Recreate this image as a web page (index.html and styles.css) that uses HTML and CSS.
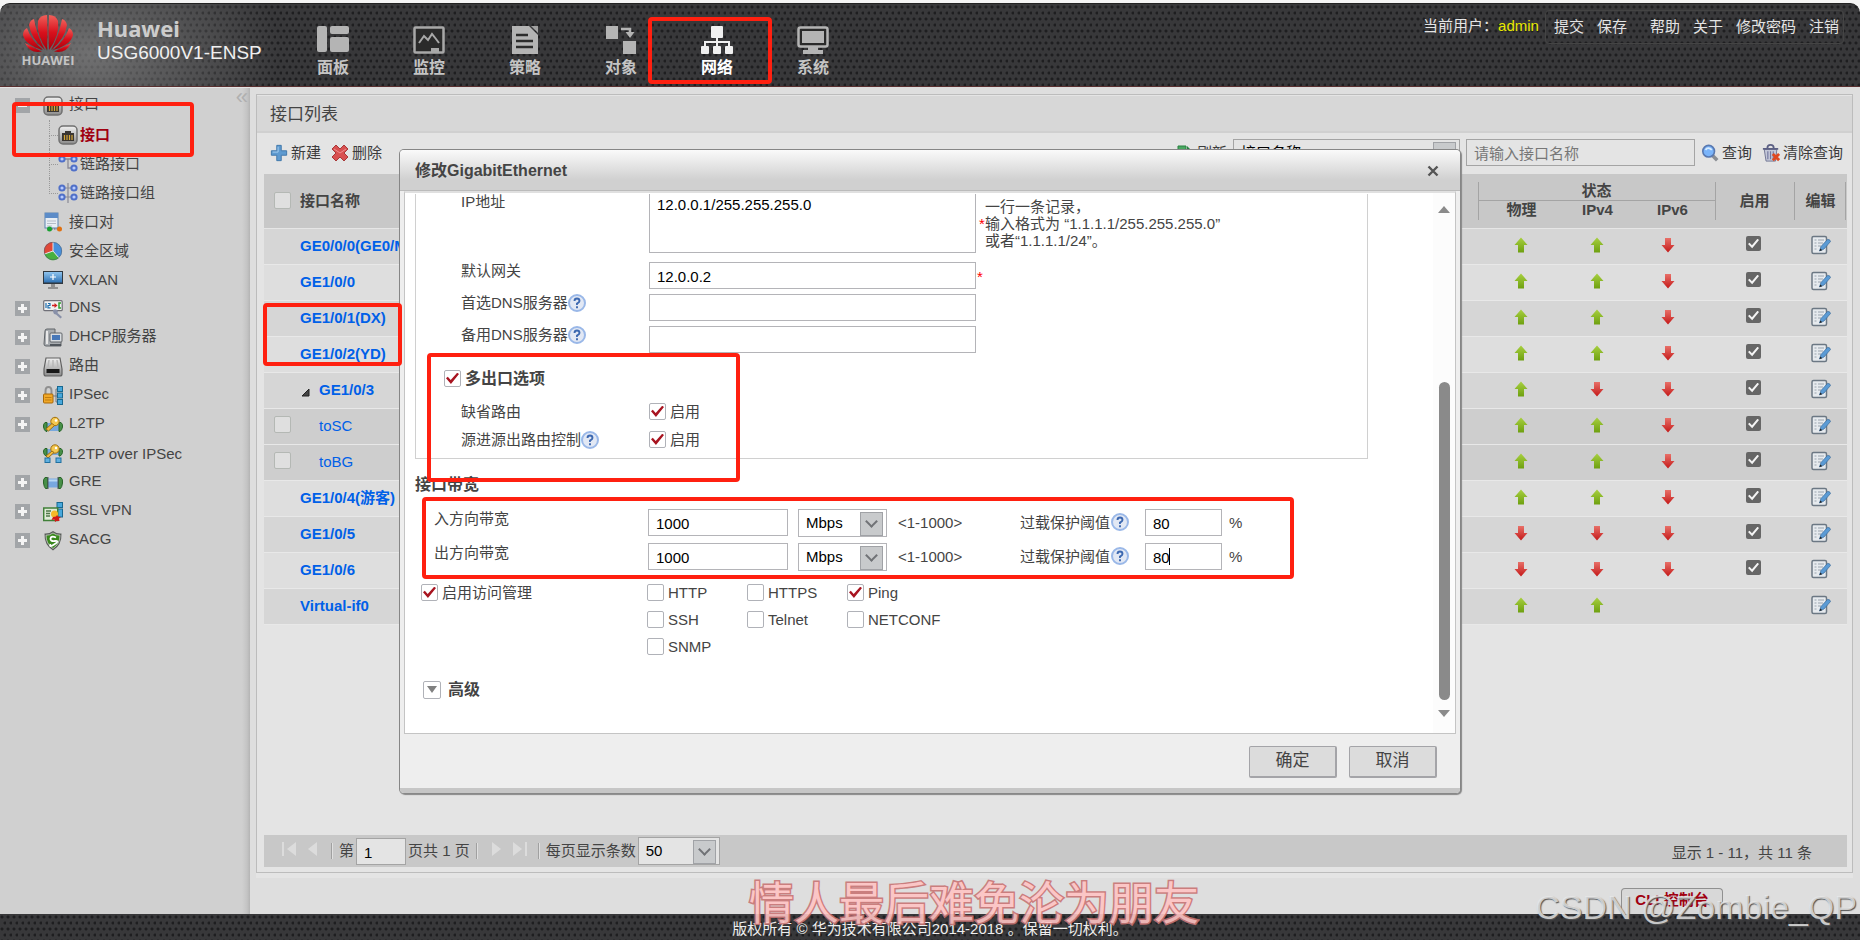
FILE: index.html
```html
<!DOCTYPE html>
<html lang="zh-CN">
<head>
<meta charset="utf-8">
<title>USG6000V1-ENSP</title>
<link rel="stylesheet" href="styles.css">
</head>
<body>
<svg class="sprite" aria-hidden="true">
  <defs>
    <linearGradient id="g-red" x1="0" y1="0" x2="0" y2="1"><stop offset="0" stop-color="#f0605a"/><stop offset=".5" stop-color="#d8101c"/><stop offset="1" stop-color="#a8000c"/></linearGradient>
    <linearGradient id="g-metal" x1="0" y1="0" x2="0" y2="1"><stop offset="0" stop-color="#f2f2f2"/><stop offset="1" stop-color="#8a8a8a"/></linearGradient>
    <linearGradient id="g-blue" x1="0" y1="0" x2="0" y2="1"><stop offset="0" stop-color="#8fc4ee"/><stop offset="1" stop-color="#2f72b4"/></linearGradient>
    <linearGradient id="g-up" x1="0" y1="0" x2="0" y2="1"><stop offset="0" stop-color="#a8d040"/><stop offset="1" stop-color="#6ea010"/></linearGradient>
    <linearGradient id="g-down" x1="0" y1="0" x2="0" y2="1"><stop offset="0" stop-color="#e87068"/><stop offset="1" stop-color="#c41818"/></linearGradient>
  </defs>
  <symbol id="i-up" viewBox="0 0 14 16"><path d="M7 0.500L13.500 8H10v7.500H4V8H0.500z" fill="url(#g-up)"/></symbol>
  <symbol id="i-down" viewBox="0 0 14 16"><path d="M7 15.500L13.500 8H10V1H4v7H0.500z" fill="url(#g-down)"/></symbol>
  <symbol id="i-edit" viewBox="0 0 20 20"><rect x="1" y="1.500" width="14.500" height="17" rx="1.500" fill="#e6eaee" stroke="#6c7884" stroke-width="1.500"/><path d="M3.500 5h2M7 5h6M3.500 8h2M7 8h5M3.500 11h2M7 11h3M3.500 14h2" stroke="#9aa4ae"/><path d="M8.500 16l1.500-4.500L16.500 4.500q2.500-.500 3 2L13 14z" fill="#5b9bd5" stroke="#3a6c9c" stroke-width=".7"/><path d="M8.500 16l.8-2.600 2 1.800z" fill="#222"/></symbol>
  <symbol id="i-port" viewBox="0 0 20 20"><rect x="1" y="1" width="18" height="18" rx="4" fill="url(#g-metal)" stroke="#707070" stroke-width="1.500"/><path d="M4 8h3V6h6v2h3v8H4z" fill="#3a3632"/><path d="M6.500 10v5M9 10v5M11.500 10v5M14 10v5" stroke="#d8a838" stroke-width="1.200"/></symbol>
  <symbol id="i-link" viewBox="0 0 20 20"><path d="M4 5h12M10 5v9h6" fill="none" stroke="#8a8a96" stroke-width="1.300"/><g fill="#b8ccff" stroke="#5070c8" stroke-width="2"><circle cx="4" cy="5" r="2.600"/><circle cx="16" cy="5" r="2.600"/><circle cx="16" cy="14" r="2.600"/></g></symbol>
  <symbol id="i-group" viewBox="0 0 20 20"><path d="M10 0v20M4 5h12M4 14h12" fill="none" stroke="#8a8a96" stroke-width="1.200"/><g fill="#b8ccff" stroke="#5070c8" stroke-width="2"><circle cx="4" cy="5" r="2.600"/><circle cx="16" cy="5" r="2.600"/><circle cx="4" cy="14" r="2.600"/><circle cx="16" cy="14" r="2.600"/></g></symbol>
  <symbol id="i-pair" viewBox="0 0 20 20"><rect x="2" y="1" width="13" height="15" fill="#e8eef4" stroke="#5c84b0"/><path d="M2 1h13v5H2z" fill="#5c8cc8"/><path d="M4 9h9M4 11.500h9M4 14h5" stroke="#b4bcc8"/><path d="M6 17h10" stroke="#667" stroke-dasharray="1.500 1"/><circle cx="6.500" cy="17" r="2.500" fill="#18a030"/><circle cx="16.500" cy="17" r="2.500" fill="#e07010"/></symbol>
  <symbol id="i-zone" viewBox="0 0 20 20"><circle cx="10" cy="10" r="9" fill="#4890dc"/><path d="M10 10L1.500 13A9 9 0 0 0 16 17z" fill="#48b040"/><path d="M10 10V1A9 9 0 0 0 1.500 13z" fill="#e04838"/><path d="M10 1v9l6 7M10 10L1.500 13" stroke="#e8e8e8" fill="none"/><circle cx="10" cy="10" r="8.700" fill="none" stroke="#505860" stroke-opacity=".5"/></symbol>
  <symbol id="i-vx" viewBox="0 0 20 20"><rect x="0" y="1" width="20" height="13" fill="#303840"/><rect x="1" y="2" width="18" height="10.500" fill="url(#g-blue)"/><path d="M10 4v6M7 7h6" stroke="#fff" stroke-width="1.200"/><path d="M8 14h4v3h3v2H5v-2h3z" fill="#909090"/></symbol>
  <symbol id="i-dns" viewBox="0 0 20 20"><rect x=".7" y="1.700" width="18.500" height="10" rx="1" fill="#f0f0f0" stroke="#707078" stroke-width="1.200"/><path d="M3 4v5M5 4.500h2v2H5v2.300h2.500" stroke="#2070b0" fill="none" stroke-width="1.200"/><path d="M9 6.500h3" stroke="#d02020" stroke-width="1.500"/><path d="M11.500 4l3 2.500-3 2.500z" fill="#d02020"/><path d="M18 4h-2v5h2" stroke="#30a030" fill="none" stroke-width="1.500"/><path d="M10 11q3-2 5 1l-.5 2 4.500 4-1.500 1.500-4.500-4q-3 0-3-4.500" fill="#8890a8"/></symbol>
  <symbol id="i-dhcp" viewBox="0 0 20 20"><path d="M2 3q0-2 2-2h8v5h6v12H3q-2 0-2-2z" fill="#a8acb0" stroke="#606468"/><path d="M4 3v13" stroke="#e8e8e8" stroke-width="2"/><rect x="7" y="5" width="12" height="9" rx="1" fill="#d8dce0" stroke="#606468"/><rect x="9" y="7" width="8" height="5" fill="#4878b8"/><path d="M7 17h11" stroke="#50565c" stroke-width="2"/></symbol>
  <symbol id="i-route" viewBox="0 0 20 20"><path d="M3 1h14l2 11v5q0 2-2 2H3q-2 0-2-2v-5z" fill="url(#g-metal)" stroke="#606060" stroke-width="1.200"/><path d="M6 3L5 10M10 3v7M14 3l1 7" stroke="#b8b8b8" stroke-width="1.500"/><rect x="3.500" y="12" width="13" height="4" fill="#181818"/></symbol>
  <symbol id="i-ipsec" viewBox="0 0 20 20"><path d="M2.500 8V5q0-4 3-4t3 4v3" fill="none" stroke="#909090" stroke-width="2"/><rect x=".5" y="8" width="9.500" height="9" rx="1" fill="#f0a828" stroke="#a86808"/><path d="M2 11.500h6.500M2 14h6.500" stroke="#c07c10"/><path d="M10 10h4M15 3h-2v13h2" stroke="#707880" fill="none"/><g fill="#48a8dc" stroke="#186890"><rect x="14.500" y=".5" width="5" height="5"/><rect x="14.500" y="7" width="5" height="5"/><rect x="14.500" y="13.500" width="5" height="5"/></g></symbol>
  <symbol id="i-l2tp" viewBox="0 0 20 20"><path d="M2 8h16v8H2z" fill="#78a8dc"/><path d="M4 7.500H2Q0 9 .5 12T3 16.500h1zM16 7.500h2q2 1.500 1.500 4.500T17 16.500h-1z" fill="#489048" stroke="#286428"/><circle cx="12" cy="6.500" r="4.200" fill="#f4c850" stroke="#a07010"/><circle cx="13" cy="5.500" r="1.300" fill="#fff"/><path d="M9 8.500L3 14l2.500 2L11.500 10.500z" fill="#f0bc40" stroke="#a07010"/></symbol>
  <symbol id="i-l2ip" viewBox="0 0 20 20"><path d="M2 5h16v6H2z" fill="#78a8dc"/><path d="M4 4.500H2Q0 6 .5 8.500T3 12h1zM16 4.500h2q2 1.500 1.500 4T17 12h-1z" fill="#489048" stroke="#286428"/><circle cx="12" cy="5" r="4.200" fill="#f4c850" stroke="#a07010"/><circle cx="13" cy="4" r="1.200" fill="#fff"/><path d="M9 7l-6 5 2 2 6-5.500z" fill="#f0bc40" stroke="#a07010"/><g fill="#60b0e0" stroke="#2070a0"><rect x="2" y="14" width="5" height="4.500"/><rect x="13" y="14" width="5" height="4.500"/></g></symbol>
  <symbol id="i-gre" viewBox="0 0 20 20"><path d="M4 5.500h12v9H4z" fill="#78a8e0"/><path d="M4 7.500h12" stroke="#b8d8f4" stroke-width="2"/><path d="M4.500 4.500H2Q0 6 .5 10t2 5.500h2zM15.500 4.500H18q2 1.500 1.500 5.500t-2 5.500h-2z" fill="#489048" stroke="#286428"/><path d="M5 4v12M15 4v12" stroke="#505860"/></symbol>
  <symbol id="i-ssl" viewBox="0 0 20 20"><g fill="#48a8dc" stroke="#186890"><rect x="14" y=".5" width="5.500" height="5"/><rect x="14" y="7" width="5.500" height="8"/></g><rect x=".7" y="6" width="14" height="12.500" fill="#e0ecd8" stroke="#408038" stroke-width="1.500"/><path d="M3 9h5M3 11.500h4M3 14h4" stroke="#507848" stroke-width="1.300"/><circle cx="11.500" cy="12" r="3.500" fill="#f4b828"/><path d="M10 15l3-.5 1-1.500 1 1.500 3 .5-2 1.500.5 2.500h-3l-1.500 1-.5-2.500-3 .500z" fill="#d01818"/></symbol>
  <symbol id="i-sacg" viewBox="0 0 20 20"><path d="M10 0q4 3 8.500 2.500Q19 14 10 19.500 1 14 1.500 2.500 6 3 10 0z" fill="#585c58"/><path d="M10 2q3.500 2.500 7 2.200Q17 13 10 17.500 3 13 3 4.200 6.500 4.500 10 2z" fill="#38881c" stroke="#e0e0e0" stroke-width=".7"/><path d="M13 6.500q-5-2-5.500 1T12 10t-.5 3.300T7.500 13" fill="none" stroke="#fff" stroke-width="1.800"/></symbol>
  <symbol id="i-help" viewBox="0 0 18 18"><circle cx="9" cy="9" r="8" fill="#e2e8f4" stroke="#9ab8e8" stroke-width="2"/><path d="M6.500 7q0-2.500 2.500-2.500T11.500 7Q11.500 8.300 9 9.600V11M9 12.200v2" fill="none" stroke="#3c68b0" stroke-width="1.900"/></symbol>
  <symbol id="i-plus" viewBox="0 0 20 20"><path d="M7.500 1.500h5v6h6v5h-6v6h-5v-6h-6v-5h6z" fill="#5e9ad0" stroke="#3c74a8"/><path d="M9 3v6H3" stroke="#a8d0f0" fill="none"/></symbol>
  <symbol id="i-del" viewBox="0 0 18 18"><path d="M5 1l4 4 4-4 4 4-4 4 4 4-4 4-4-4-4 4-4-4 4-4-4-4z" fill="#d85050" stroke="#a83838" stroke-linejoin="round"/><path d="M3 5l6 4 6-4" stroke="#f09090" fill="none"/></symbol>
  <symbol id="i-find" viewBox="0 0 20 20"><path d="M12 12l6 6" stroke="#8a8e94" stroke-width="4"/><circle cx="8.500" cy="8" r="6.500" fill="#7ab4fa" stroke="#5878b0" stroke-width="1.800"/><path d="M5 6.500q3-4 7 0" stroke="#d8ecff" stroke-width="2" fill="none"/></symbol>
  <symbol id="i-clear" viewBox="0 0 20 20"><path d="M2.500 6h14L15 19H4.500z" fill="#c4c8d8" stroke="#6c7090"/><path d="M6.500 8v9M9.500 8v9M12.500 8v9" stroke="#7478a0" stroke-width="1.300"/><path d="M1 5.500h17M6 4.500Q6 1 9.500 1T13 4.500" stroke="#5c6084" stroke-width="2" fill="none"/><path d="M12 11l7 7M19 11l-7 7" stroke="#e04820" stroke-width="3.200"/></symbol>
</svg>

<header class="top">
  <div class="brand">
    <div class="logo">
      <svg width="52" height="40" viewBox="0 0 52 40"><g fill="url(#g-red)">
        <path d="M25 37Q14 22 16 8q2-6 9-6 1 17 0 35z"/><path d="M27 37q11-15 9-29-2-6-9-6-1 17 0 35z"/>
        <path d="M23 37Q9 26 7 12q1-5 5-6 3 17 11 31z"/><path d="M29 37q14-11 16-25-1-5-5-6-3 17-11 31z"/>
        <path d="M21 37Q3 32 1 22q0-5 4-7 4 12 16 22z"/><path d="M31 37q18-5 20-15 0-5-4-7-4 12-16 22z"/>
        <path d="M20 38.500Q8 41 3 30q9 5 17 8.500z"/><path d="M32 38.500Q44 41 49 30q-9 5-17 8.500z"/></g></svg>
      <span class="logo-word">HUAWEI</span>
    </div>
    <div class="product"><strong>Huawei</strong><span>USG6000V1-ENSP</span></div>
  </div>
  <nav class="nav">
    <a href="#"><svg viewBox="0 0 32 28"><g fill="#b4b4b4"><rect width="10" height="26" rx="2"/><rect x="13" width="19" height="8" rx="2"/><rect x="13" y="11" width="19" height="15" rx="2"/></g></svg>面板</a>
    <a href="#"><svg viewBox="0 0 32 28"><rect x="1.500" y="1.500" width="29" height="25" rx="1" fill="#2a2a2a" stroke="#a8a8a8" stroke-width="2.500"/><path d="M6 17l5-7 4 4 4-6 4 5 3 4" fill="none" stroke="#a8a8a8" stroke-width="2"/><path d="M18 26v-4h8v4z" fill="#a8a8a8"/></svg>监控</a>
    <a href="#"><svg viewBox="0 0 32 28"><path d="M3 0h17l9 9v19H3z" fill="#b4b4b4"/><path d="M22 0h7v7z" fill="#a0a0a0"/><path d="M7 9h12M7 15h17M7 21h17" stroke="#2c2c2c" stroke-width="2.400"/></svg>策略</a>
    <a href="#"><svg viewBox="0 0 32 28"><rect x="1" width="12" height="13" fill="#b4b4b4"/><rect x="18" y="15" width="13" height="13" fill="#b4b4b4"/><path d="M16 3h9v4" fill="none" stroke="#b4b4b4" stroke-width="2.500"/><path d="M20.500 6h9L25 12z" fill="#b4b4b4"/></svg>对象</a>
    <a href="#" class="current"><svg viewBox="0 0 32 28"><g fill="#f0f0f0"><rect x="10" width="12" height="12" rx="1"/><rect y="20" width="8" height="8" rx="1"/><rect x="12" y="20" width="8" height="8" rx="1"/><rect x="24" y="20" width="8" height="8" rx="1"/></g><path d="M16 11v10M4 21v-5h24v5" fill="none" stroke="#f0f0f0" stroke-width="2"/></svg>网络</a>
    <a href="#"><svg viewBox="0 0 32 28"><rect x="1.500" y="1.500" width="29" height="19" rx="2" fill="#2a2a2a" stroke="#b4b4b4" stroke-width="2.500"/><rect x="5" y="5" width="22" height="12" fill="#b4b4b4"/><path d="M11 21h10v3h5v4H6v-4h5z" fill="#b4b4b4"/></svg>系统</a>
  </nav>
  <div class="user">
    <span>当前用户：<b>admin</b></span>
    <div class="user-links"><a href="#">提交</a><a href="#">保存</a><a href="#" class="apart">帮助</a><a href="#">关于</a><a href="#">修改密码</a><a href="#">注销</a></div>
  </div>
</header>

<div class="middle">
  <aside class="side">
    <button class="collapse" type="button" aria-label="收起">«</button>
    <ul class="tree">
      <li><button type="button" class="tg minus" aria-label="收起"></button><svg class="ic"><use href="#i-port"/></svg><a href="#">接口</a></li>
      <li class="sub active"><svg class="ic"><use href="#i-port"/></svg><a href="#">接口</a></li>
      <li class="sub"><svg class="ic"><use href="#i-link"/></svg><a href="#">链路接口</a></li>
      <li class="sub last"><svg class="ic"><use href="#i-group"/></svg><a href="#">链路接口组</a></li>
      <li class="leaf"><svg class="ic"><use href="#i-pair"/></svg><a href="#">接口对</a></li>
      <li class="leaf"><svg class="ic"><use href="#i-zone"/></svg><a href="#">安全区域</a></li>
      <li class="leaf"><svg class="ic"><use href="#i-vx"/></svg><a href="#">VXLAN</a></li>
      <li><button type="button" class="tg" aria-label="展开"></button><svg class="ic"><use href="#i-dns"/></svg><a href="#">DNS</a></li>
      <li><button type="button" class="tg" aria-label="展开"></button><svg class="ic"><use href="#i-dhcp"/></svg><a href="#">DHCP服务器</a></li>
      <li><button type="button" class="tg" aria-label="展开"></button><svg class="ic"><use href="#i-route"/></svg><a href="#">路由</a></li>
      <li><button type="button" class="tg" aria-label="展开"></button><svg class="ic"><use href="#i-ipsec"/></svg><a href="#">IPSec</a></li>
      <li><button type="button" class="tg" aria-label="展开"></button><svg class="ic"><use href="#i-l2tp"/></svg><a href="#">L2TP</a></li>
      <li class="leaf"><svg class="ic"><use href="#i-l2ip"/></svg><a href="#">L2TP over IPSec</a></li>
      <li><button type="button" class="tg" aria-label="展开"></button><svg class="ic"><use href="#i-gre"/></svg><a href="#">GRE</a></li>
      <li><button type="button" class="tg" aria-label="展开"></button><svg class="ic"><use href="#i-ssl"/></svg><a href="#">SSL VPN</a></li>
      <li><button type="button" class="tg" aria-label="展开"></button><svg class="ic"><use href="#i-sacg"/></svg><a href="#">SACG</a></li>
    </ul>
  </aside>

  <main class="content">
    <section class="panel">
      <h1 class="panel-title">接口列表</h1>
      <div class="toolbar">
        <button type="button" class="tool"><svg class="ic18"><use href="#i-plus"/></svg>新建</button>
        <button type="button" class="tool"><svg class="ic18"><use href="#i-del"/></svg>删除</button>
        <div class="search">
          <button type="button" class="tool"><svg class="ic18" viewBox="0 0 18 18"><path d="M2 2h8v4H6v9H2z" fill="#48a860" stroke="#288040"/><path d="M11 2l5 5h-5z" fill="#288040"/></svg>刷新</button>
          <span class="sel sel-field"><select aria-label="查询字段"><option>接口名称</option></select></span>
          <input class="box search-box" type="text" placeholder="请输入接口名称" aria-label="接口名称">
          <button type="button" class="tool"><svg class="ic18"><use href="#i-find"/></svg>查询</button>
          <button type="button" class="tool"><svg class="ic18"><use href="#i-clear"/></svg>清除查询</button>
        </div>
      </div>
      <div class="grid-wrap">
        <table class="grid">
          <colgroup><col class="c-check"><col><col class="c-phy"><col class="c-v4"><col class="c-v6"><col class="c-on"><col class="c-edit"></colgroup>
          <thead>
            <tr><th rowspan="2"><input type="checkbox" class="ck dim" aria-label="全选"></th><th rowspan="2" class="name">接口名称</th><th colspan="3" class="group">状态</th><th rowspan="2" class="sep">启用</th><th rowspan="2" class="sep end">编辑</th></tr>
            <tr><th class="first">物理</th><th>IPv4</th><th>IPv6</th></tr>
          </thead>
          <tbody>
            <tr class="a"><td></td><td class="name"><a href="#">GE0/0/0(GE0/MGMT)</a></td><td><svg class="ar"><use href="#i-up"/></svg></td><td><svg class="ar"><use href="#i-up"/></svg></td><td><svg class="ar"><use href="#i-down"/></svg></td><td><input type="checkbox" class="on" checked aria-label="启用"></td><td><svg class="ed"><use href="#i-edit"/></svg></td></tr>
            <tr><td></td><td class="name"><a href="#">GE1/0/0</a></td><td><svg class="ar"><use href="#i-up"/></svg></td><td><svg class="ar"><use href="#i-up"/></svg></td><td><svg class="ar"><use href="#i-down"/></svg></td><td><input type="checkbox" class="on" checked aria-label="启用"></td><td><svg class="ed"><use href="#i-edit"/></svg></td></tr>
            <tr class="a"><td></td><td class="name"><a href="#">GE1/0/1(DX)</a></td><td><svg class="ar"><use href="#i-up"/></svg></td><td><svg class="ar"><use href="#i-up"/></svg></td><td><svg class="ar"><use href="#i-down"/></svg></td><td><input type="checkbox" class="on" checked aria-label="启用"></td><td><svg class="ed"><use href="#i-edit"/></svg></td></tr>
            <tr><td></td><td class="name"><a href="#">GE1/0/2(YD)</a></td><td><svg class="ar"><use href="#i-up"/></svg></td><td><svg class="ar"><use href="#i-up"/></svg></td><td><svg class="ar"><use href="#i-down"/></svg></td><td><input type="checkbox" class="on" checked aria-label="启用"></td><td><svg class="ed"><use href="#i-edit"/></svg></td></tr>
            <tr class="a"><td></td><td class="name"><svg class="tri" viewBox="0 0 19 10"><path d="M9 2v7H2z" fill="#444" stroke="#222"/></svg><a href="#">GE1/0/3</a></td><td><svg class="ar"><use href="#i-up"/></svg></td><td><svg class="ar"><use href="#i-down"/></svg></td><td><svg class="ar"><use href="#i-down"/></svg></td><td><input type="checkbox" class="on" checked aria-label="启用"></td><td><svg class="ed"><use href="#i-edit"/></svg></td></tr>
            <tr class="child"><td><input type="checkbox" class="ck dim" aria-label="toSC"></td><td class="name"><a href="#">toSC</a></td><td><svg class="ar"><use href="#i-up"/></svg></td><td><svg class="ar"><use href="#i-up"/></svg></td><td><svg class="ar"><use href="#i-down"/></svg></td><td><input type="checkbox" class="on" checked aria-label="启用"></td><td><svg class="ed"><use href="#i-edit"/></svg></td></tr>
            <tr class="child"><td><input type="checkbox" class="ck dim" aria-label="toBG"></td><td class="name"><a href="#">toBG</a></td><td><svg class="ar"><use href="#i-up"/></svg></td><td><svg class="ar"><use href="#i-up"/></svg></td><td><svg class="ar"><use href="#i-down"/></svg></td><td><input type="checkbox" class="on" checked aria-label="启用"></td><td><svg class="ed"><use href="#i-edit"/></svg></td></tr>
            <tr><td></td><td class="name"><a href="#">GE1/0/4(游客)</a></td><td><svg class="ar"><use href="#i-up"/></svg></td><td><svg class="ar"><use href="#i-up"/></svg></td><td><svg class="ar"><use href="#i-down"/></svg></td><td><input type="checkbox" class="on" checked aria-label="启用"></td><td><svg class="ed"><use href="#i-edit"/></svg></td></tr>
            <tr class="a"><td></td><td class="name"><a href="#">GE1/0/5</a></td><td><svg class="ar"><use href="#i-down"/></svg></td><td><svg class="ar"><use href="#i-down"/></svg></td><td><svg class="ar"><use href="#i-down"/></svg></td><td><input type="checkbox" class="on" checked aria-label="启用"></td><td><svg class="ed"><use href="#i-edit"/></svg></td></tr>
            <tr><td></td><td class="name"><a href="#">GE1/0/6</a></td><td><svg class="ar"><use href="#i-down"/></svg></td><td><svg class="ar"><use href="#i-down"/></svg></td><td><svg class="ar"><use href="#i-down"/></svg></td><td><input type="checkbox" class="on" checked aria-label="启用"></td><td><svg class="ed"><use href="#i-edit"/></svg></td></tr>
            <tr class="a"><td></td><td class="name"><a href="#">Virtual-if0</a></td><td><svg class="ar"><use href="#i-up"/></svg></td><td><svg class="ar"><use href="#i-up"/></svg></td><td></td><td></td><td><svg class="ed"><use href="#i-edit"/></svg></td></tr>
          </tbody>
        </table>
      </div>
      <div class="pager">
        <button type="button" class="pg" aria-label="首页"><svg viewBox="0 0 16 16"><path d="M2 1v14" stroke="#dcdcdc" stroke-width="2"/><path d="M15 1v14L6 8z" fill="#dcdcdc"/></svg></button>
        <button type="button" class="pg" aria-label="上一页"><svg viewBox="0 0 16 16"><path d="M12 1v14L3 8z" fill="#dcdcdc"/></svg></button>
        <i class="bar"></i>
        <label for="page">第</label><input id="page" class="box page-box" type="text" value="1"><span>页共 1 页</span>
        <i class="bar"></i>
        <button type="button" class="pg" aria-label="下一页"><svg viewBox="0 0 16 16"><path d="M4 1v14l9-7z" fill="#dcdcdc"/></svg></button>
        <button type="button" class="pg" aria-label="末页"><svg viewBox="0 0 16 16"><path d="M14 1v14" stroke="#dcdcdc" stroke-width="2"/><path d="M1 1v14l9-7z" fill="#dcdcdc"/></svg></button>
        <i class="bar"></i>
        <label for="size">每页显示条数</label><span class="sel sel-page"><select id="size"><option>50</option></select></span>
        <span class="total">显示 1 - 11，共 11 条</span>
      </div>
    </section>
    <button type="button" class="cli">CLI 控制台</button>
  </main>
</div>

<footer class="foot">版权所有 © 华为技术有限公司2014-2018 。保留一切权利。</footer>

<div class="overlay">
  <div class="dlg" role="dialog" aria-labelledby="dlg-title">
    <div class="dlg-head"><h2 id="dlg-title">修改GigabitEthernet</h2><button type="button" class="close" aria-label="关闭"><svg width="12" height="12" viewBox="0 0 12 12"><path d="M1.500 1.500l9 9M10.500 1.500l-9 9" stroke="#555" stroke-width="2.400"/></svg></button></div>
    <div class="dlg-main">
      <form class="form">
        <div class="set">
          <div class="row ip"><label for="ip">IP地址</label><textarea id="ip" class="box">12.0.0.1/255.255.255.0</textarea><p class="hint">一行一条记录，<br><em>*</em>输入格式为 “1.1.1.1/255.255.255.0”<br>或者“1.1.1.1/24”。</p></div>
          <div class="row"><label for="gw">默认网关</label><input id="gw" class="box" type="text" value="12.0.0.2"><em>*</em></div>
          <div class="row"><label for="d1">首选DNS服务器<svg class="help"><use href="#i-help"/></svg></label><input id="d1" class="box" type="text"></div>
          <div class="row"><label for="d2">备用DNS服务器<svg class="help"><use href="#i-help"/></svg></label><input id="d2" class="box" type="text"></div>
          <label class="opt multi"><input type="checkbox" class="ck" checked>多出口选项</label>
          <div class="row short"><span>缺省路由</span><label class="opt"><input type="checkbox" class="ck" checked>启用</label></div>
          <div class="row short"><span>源进源出路由控制<svg class="help"><use href="#i-help"/></svg></span><label class="opt"><input type="checkbox" class="ck" checked>启用</label></div>
        </div>
        <h3 class="sub-title">接口带宽</h3>
        <div class="bw"><label for="in">入方向带宽</label><input id="in" class="box" type="text" value="1000"><span class="sel"><select aria-label="入方向单位"><option>Mbps</option></select></span><span class="mid">&lt;1-1000&gt;</span><label class="mid" for="t1">过载保护阈值<svg class="help"><use href="#i-help"/></svg></label><input id="t1" class="box" type="text" value="80"><span class="mid pct">%</span></div>
        <div class="bw"><label for="out">出方向带宽</label><input id="out" class="box" type="text" value="1000"><span class="sel"><select aria-label="出方向单位"><option>Mbps</option></select></span><span class="mid">&lt;1-1000&gt;</span><label class="mid" for="t2">过载保护阈值<svg class="help"><use href="#i-help"/></svg></label><span class="caret"><input id="t2" class="box" type="text" value="80"></span><span class="mid pct">%</span></div>
        <div class="access">
          <label class="opt"><input type="checkbox" class="ck" checked>启用访问管理</label>
          <div class="protos">
            <label class="opt"><input type="checkbox" class="ck">HTTP</label><label class="opt"><input type="checkbox" class="ck">HTTPS</label><label class="opt"><input type="checkbox" class="ck" checked>Ping</label>
            <label class="opt"><input type="checkbox" class="ck">SSH</label><label class="opt"><input type="checkbox" class="ck">Telnet</label><label class="opt"><input type="checkbox" class="ck">NETCONF</label>
            <label class="opt"><input type="checkbox" class="ck">SNMP</label>
          </div>
        </div>
        <button type="button" class="adv"><i></i>高级</button>
      </form>
      <div class="scroll"><i class="up"></i><i class="thumb"></i><i class="dn"></i></div>
    </div>
    <div class="dlg-foot"><button type="button" class="btn">确定</button><button type="button" class="btn">取消</button></div>
  </div>
</div>

<div class="mark m-nav"></div><div class="mark m-side"></div><div class="mark m-rows"></div><div class="mark m-multi"></div><div class="mark m-bw"></div>
<div class="lyric">情人最后难免沦为朋友</div>
<div class="wm">CSDN @Zombie_QP</div>
</body>
</html>
```
FILE: styles.css
```css
* { box-sizing: border-box; }
body {
  margin: 0; height: 100vh; overflow: hidden; position: relative;
  display: flex; flex-direction: column; padding-top: 3px;
  background: #f4f4f4; color: #444;
  font: 15px/18px "Liberation Sans", "Noto Sans CJK SC", sans-serif;
}
a { color: inherit; text-decoration: none; }
button, input, select, textarea { font: inherit; color: inherit; margin: 0; padding: 0; }
button { background: none; border: 0; }
ul, h1, h2, h3, p { margin: 0; padding: 0; list-style: none; }
.sprite { position: absolute; width: 0; height: 0; }
em { color: #f00; font-style: normal; }

/* header and footer share the perforated metal texture */
.top, .foot {
  background:
    radial-gradient(circle at 2px 3px, #1e1e20 1px, transparent 2px) 0 0 / 6px 12px,
    radial-gradient(circle at 5px 9px, #1e1e20 1px, transparent 2px) 0 0 / 6px 12px,
    #38383a;
}
.top {
  height: 84px; flex: none; display: flex; border-radius: 10px 10px 0 0;
  border-top: 1px solid #222; border-bottom: 1px solid #5a3030; color: #e4e4e4; overflow: hidden;
}
.brand {
  width: 285px; display: flex; gap: 23px; padding: 9px 0 0 22px;
  background: radial-gradient(ellipse 190px 130px at 90px 50px, rgba(150,150,150,.6), transparent);
}
.logo { width: 52px; display: flex; flex-direction: column; align-items: center; }
.logo svg { flex: none; }
.logo-word { font: bold 13px/14px "Open Sans", sans-serif; color: #c4c4c4; }
.product { display: flex; flex-direction: column; font-size: 19px; line-height: 26px; padding-top: 3px; color: #f0f0f0; }
.product strong { font: bold 22px/24px "Noto Sans", sans-serif; color: #ccc; }
.nav { display: flex; }
.nav a { width: 96px; padding-top: 22px; display: flex; flex-direction: column; align-items: center; gap: 4px; font-size: 16px; line-height: 20px; font-weight: bold; color: #c4c4c4; }
.nav svg { width: 32px; height: 28px; }
.nav .current { color: #fff; }
.user { margin-left: auto; margin-right: 16px; padding-top: 6px; display: flex; gap: 6px; line-height: 32px; height: 40px; }
.user b { color: #e8e800; font-weight: normal; }
.user-links { display: flex; gap: 13px; padding: 0 4px 0 8px; border: 1px solid #444; border-radius: 4px; height: 34px; }
.user-links .apart { margin-left: 10px; }
.foot { height: 26px; flex: none; color: #eee; text-align: center; line-height: 30px; }

.middle { flex: 1; min-height: 0; display: flex; background: #dedede; }
.side { width: 250px; flex: none; position: relative; padding-top: 3px; background: linear-gradient(90deg, #d0d0d0 0 242px, #c4c4c4 247px, #b4b4b4 250px); border-top: 1px solid #e4e4e4; }
.collapse { position: absolute; top: 0; right: 2px; color: #b0b0b0; font-size: 22px; line-height: 18px; }
.tree li { height: 29px; padding-left: 15px; display: flex; align-items: center; position: relative; }
.tree a { padding: 0 0 3px 6px; }
.ic { width: 20px; height: 20px; flex: none; }
.tg { width: 15px; height: 15px; margin-right: 13px; background: linear-gradient(#f4f4f4, #f4f4f4) center / 9px 3px no-repeat, linear-gradient(#f4f4f4, #f4f4f4) center / 3px 9px no-repeat, #a2a5a8; }
.tg.minus { background: linear-gradient(#f4f4f4, #f4f4f4) center / 9px 3px no-repeat, #a2a5a8; }
.tree .leaf { padding-left: 43px; }
.tree .leaf a { padding-bottom: 0; }
.tree .sub { padding-left: 58px; }
.tree .sub a { padding: 0 0 0 2px; }
.tree .sub::before { content: ""; position: absolute; left: 49px; top: 0; width: 8px; height: 15px; border: dotted #999; border-width: 0 0 1px 1px; }
.tree .sub:not(.last)::after { content: ""; position: absolute; left: 49px; top: 15px; height: 14px; border-left: 1px dotted #999; }
.active { color: #a00010; font-weight: bold; }

.content { flex: 1; min-width: 0; position: relative; display: flex; padding: 7px 7px 41px 6px; }
.panel { flex: 1; display: flex; flex-direction: column; background: #e4e4e4; border: 1px solid #bcbcbc; box-shadow: 0 5px 0 #e4e4e4; padding-bottom: 5px; min-width: 0; }
.panel-title { font-size: 17px; font-weight: normal; line-height: 37px; padding: 0 13px; margin-top: 1px; background: #d7d7d7; border-bottom: 2px solid #d0d0d0; height: 37px; }
.toolbar { height: 41px; display: flex; align-items: center; gap: 10px; padding: 0 9px 2px 13px; color: #3c3c3c; }
.tool { display: flex; align-items: center; gap: 3px; }
.ic18 { width: 18px; height: 18px; }
.search { margin-left: auto; display: flex; align-items: center; gap: 6px; }
.search .tool:last-child { margin-left: 4px; }
.box { border: 1px solid #b4b4b8; background: #fff; height: 27px; padding: 2px 7px 0; color: #000; outline: 0; border-radius: 0; min-width: 0; }
.panel .box, .panel .sel select { background: #e4e4e4; border-color: #a4a4a4; }
.search-box { width: 229px; }
.search-box::placeholder { color: #777; }
.sel { position: relative; display: inline-flex; }
.sel select { appearance: none; width: 100%; height: 28px; border: 1px solid #b4b4b8; border-radius: 0; background: #fff; padding: 0 7px; color: #000; }
.sel::before { content: ""; position: absolute; right: 4px; top: 3px; width: 21px; height: 22px; background: #c8cacc; border: 1px solid #a0a2a6; pointer-events: none; }
.sel::after { content: ""; position: absolute; right: 11px; top: 8px; width: 7px; height: 7px; border: solid #707276; border-width: 0 2px 2px 0; transform: rotate(45deg); pointer-events: none; }
.sel-field { width: 227px; }
.sel-page { width: 82px; }

.grid-wrap { flex: 1; padding: 0 5px 0 7px; min-height: 0; }
.grid { width: 100%; border-collapse: collapse; table-layout: fixed; }
.c-check { width: 36px; } .c-phy { width: 87px; } .c-v4 { width: 65px; } .c-v6 { width: 85px; } .c-on { width: 79px; } .c-edit { width: 53px; }
.grid th, .grid td { padding: 0; text-align: center; }
.grid thead { background: #c8c8c8; }
.grid th { height: 27px; background: no-repeat 0 0; }
.grid thead tr:last-child th { line-height: 16px; vertical-align: top; padding-top: 1px; }
.grid thead { border-bottom: 1px solid #e6e6e6; }
.grid .group { background-image: linear-gradient(#a4a4a4, #a4a4a4), linear-gradient(#a4a4a4, #a4a4a4); background-size: 1px 19px, 100% 1px; background-position: 0 100%, 0 100%; padding-top: 6px; }
.grid .first { background-image: linear-gradient(#a4a4a4, #a4a4a4); background-size: 1px 19px; }
.grid .sep { background-image: linear-gradient(#a4a4a4, #a4a4a4); background-size: 1px 38px; background-position: 0 50%; }
.grid .end { background-image: linear-gradient(#a4a4a4, #a4a4a4), linear-gradient(#a4a4a4, #a4a4a4); background-size: 1px 38px, 1px 38px; background-position: 0 50%, 51px 50%; }
.grid td { height: 36px; }
.grid tbody tr { background: #dedede; border-bottom: 1px solid #e8e8e8; }
.grid tbody tr.a { background: #d6d6d6; }
.grid tbody tr.child { background: #cecece; }
.grid tbody .name { font-weight: bold; color: #0060e8; }
.grid .name { text-align: left; }
.grid .child .name { font-weight: normal; padding-left: 19px; }
.grid tbody td:not(.name) { padding-bottom: 3px; }
.grid tbody td:nth-child(5) { padding-right: 8px; }
.grid input, .grid svg { display: block; margin: 0 auto; }
.grid .name .tri { display: inline-block; width: 19px; height: 10px; vertical-align: -2px; }
.ar { width: 14px; height: 16px; }
.ed { width: 20px; height: 20px; }

.ck { appearance: none; width: 17px; height: 17px; flex: none; border: 1px solid #b0b2b8; border-radius: 2px; background: #fff; display: grid; place-items: center; }
.ck:checked::before { content: ""; width: 13px; height: 12px; background: #a81420; clip-path: polygon(0 48%, 14% 36%, 36% 62%, 86% 2%, 100% 12%, 38% 96%); }
.grid .dim { background: #dfdfdf; border-color: #b4b8b4; }
.on { appearance: none; width: 15px; height: 15px; border-radius: 2px; background: #666; }
.grid .on { display: grid; place-items: center; }
.grid tbody td:nth-child(6) { padding-bottom: 5px; padding-right: 2px; }
.on::before { content: ""; width: 11px; height: 10px; background: #f4f4f4; clip-path: polygon(0 56%, 14% 42%, 36% 68%, 86% 2%, 100% 14%, 38% 98%); }

.pager { height: 32px; margin: 0 5px 0 7px; background: #c8c8c8; display: flex; align-items: center; padding: 0 35px 0 13px; }
.pg { width: 16px; height: 16px; margin: 0 4px; }
.pg svg { width: 16px; height: 16px; display: block; margin-top: -4px; }
.bar { width: 2px; height: 16px; border-left: 1px solid #a0a0a0; border-right: 1px solid #e0e0e0; margin: 0 6px; }
.page-box { width: 50px; margin: 0 2px 0 2px; }
.sel-page { margin-left: 2px; }
.total { margin-left: auto; padding-top: 4px; }
.cli { position: absolute; right: 137px; bottom: 0; width: 102px; height: 26px; border: 1px solid #909090; border-bottom: 0; border-radius: 4px 4px 0 0; color: #a00010; font-weight: bold; background: #d8d8d8; padding-bottom: 4px; }

.overlay { position: absolute; inset: 0; display: grid; place-items: center; padding-top: 2px; }
.dlg { width: min(1062px, 96vw); border: 1px solid #868686; border-radius: 5px; background: #eee; box-shadow: 1px 1px 1px #888; border-bottom-color: #888; overflow: hidden; }
.dlg-head { height: 41px; display: flex; align-items: center; justify-content: space-between; padding: 2px 21px 0 15px; background: linear-gradient(#fafafa, #d0d0d0 75%); border-bottom: 1px solid #bbb; }
.dlg-head h2 { font-size: 16px; }
.close { display: flex; }
.dlg-main { margin: 0 4px; border: 1px solid #c4c4c4; border-top: 2px solid #e0e0e0; background: #fff; display: flex; height: 543px; }
.form { flex: 1; min-width: 0; }
.set { margin: 1px 65px 0 10px; padding: 0 0 9px 45px; border: 1px solid #d0d0d0; border-top: 0; display: flex; flex-direction: column; gap: 5px; }
.row { display: grid; grid-template-columns: 188px 327px 1fr; height: 27px; }
.row > label, .bw > label:first-child { display: flex; }
.row > em { padding: 6px 0 0 1px; }
.row.ip { height: 59px; margin-bottom: 4px; }
.ip label { line-height: 16px; }
.ip textarea { height: 59px; border-top: 0; resize: none; overflow: hidden; }
.hint { padding: 4px 0 0 9px; line-height: 17px; }
.hint em { float: left; margin-left: -6px; }
.help { width: 18px; height: 18px; vertical-align: top; }
.opt { display: flex; align-items: center; gap: 4px; height: 18px; }
.multi { margin: 12px 0 10px -17px; font-weight: bold; font-size: 16px; }
.row.short { height: 18px; margin-bottom: 5px; }
.row.short:last-child { margin-bottom: 0; }
.sub-title { font-size: 16px; line-height: 24px; margin: 14px 0 12px 10px; }
.bw { display: grid; grid-template-columns: 214px 140px 110px 122px 125px 77px 1fr; padding-left: 29px; margin-bottom: 7px; height: 27px; }
.bw > label:first-child { line-height: 20px; }
.bw .sel { margin-left: 10px; width: 89px; }
.bw .mid { line-height: 27px; }
.bw .mid .help { margin: 4px 0 0 1px; }
.bw .pct { padding-left: 7px; }
.caret { position: relative; display: flex; }
.caret .box { width: 100%; }
.caret::after { content: ""; position: absolute; left: 24px; top: 5px; width: 1px; height: 17px; background: #000; }
.access { display: grid; grid-template-columns: 226px 1fr; padding-left: 16px; margin-top: 14px; }
.protos { display: grid; grid-template-columns: 100px 100px 1fr; gap: 9px 0; }
.adv { display: flex; align-items: center; gap: 7px; margin: 25px 0 0 18px; font-weight: bold; font-size: 16px; }
.adv i { width: 18px; height: 18px; border: 1px solid #b0b2b8; border-radius: 2px; display: grid; place-items: center; }
.adv i::before { content: ""; border: 5px solid transparent; border-top: 7px solid #808080; border-bottom: 0; }
.scroll { width: 22px; background: #fcfcfc; display: flex; flex-direction: column; align-items: center; padding: 13px 0 16px; }
.up, .dn { border: 6px solid transparent; }
.up { border-bottom: 7px solid #8a8a8a; border-top: 0; }
.dn { border-top: 7px solid #8a8a8a; border-bottom: 0; margin-top: 10px; }
.thumb { width: 11px; flex: 1; margin-top: 169px; border-radius: 6px; background: #8a8a8a; }
.dlg-foot { height: 59px; padding: 12px 23px 0; display: flex; justify-content: flex-end; gap: 12px; border-bottom: 5px solid #c6c6c6; }
.btn { width: 88px; height: 32px; font-size: 17px; background: #dcdcdc; border: 1px solid #a4a4a8; border-width: 1px 2px 2px 1px; border-radius: 2px; }

.mark { position: absolute; border: 4px solid #ff2010; border-radius: 4px; pointer-events: none; }
.m-nav { left: 648px; top: 17px; width: 124px; height: 67px; }
.m-side { left: 12px; top: 102px; width: 182px; height: 55px; }
.m-rows { left: 263px; top: 303px; width: 139px; height: 63px; }
.m-multi { left: 427px; top: 353px; width: 313px; height: 129px; }
.m-bw { left: 422px; top: 497px; width: 872px; height: 82px; }
.lyric { position: absolute; left: 749px; bottom: 9px; font: 45px/60px "Noto Sans CJK SC", sans-serif; color: #ffc4c4; -webkit-text-stroke: 3px #c87474; paint-order: stroke fill; opacity: .9; pointer-events: none; white-space: nowrap; }
.wm { position: absolute; right: 3px; bottom: 13px; font-size: 34px; line-height: 40px; color: rgba(235,235,235,.8); text-shadow: 1px 1px 1px #555; white-space: nowrap; pointer-events: none; }
```
